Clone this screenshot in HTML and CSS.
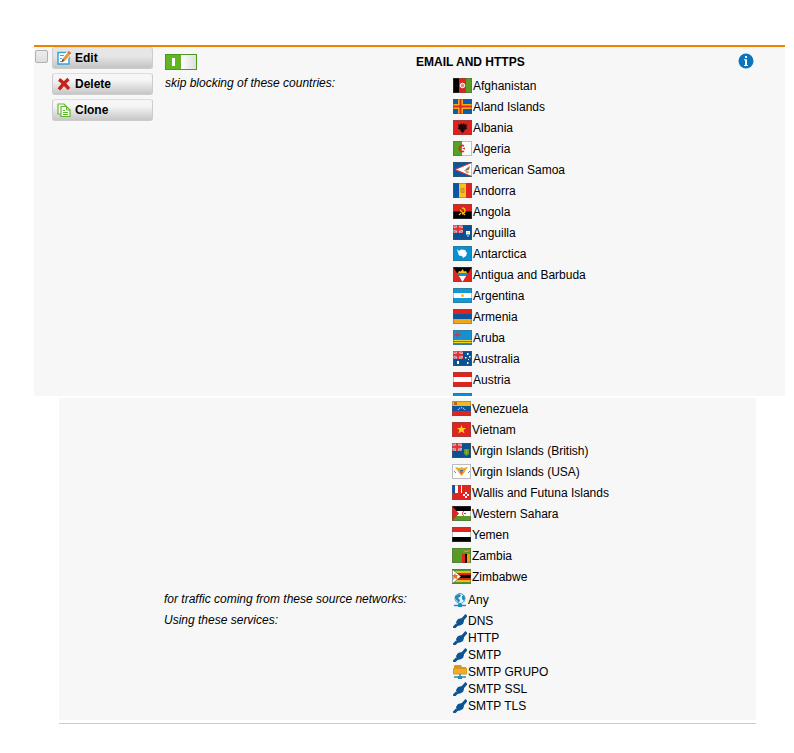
FILE: index.html
```html
<!DOCTYPE html>
<html lang="en">
<head>
    <meta charset="UTF-8">
    <title>Country Blocking</title>
    <link rel="stylesheet" href="styles.css">
</head>
<body>
    <svg class="defs" aria-hidden="true">
        <symbol id="union" viewBox="0 0 10 8">
            <path fill="#5a7db2" d="M0 0h10v8H0z"/>
            <path stroke="#f6d3d5" stroke-width="2" d="M0 0l10 8M10 0L0 8"/>
            <path stroke="#f6d3d5" stroke-width="3" d="M5 0v8M0 4h10"/>
            <path stroke="#e2343a" stroke-width="1" d="M0 0l10 8M10 0L0 8"/>
            <path stroke="#e2343a" stroke-width="2" d="M5 0v8M0 4h10"/>
        </symbol>
        <symbol id="service" viewBox="0 0 14 14">
            <path stroke="#0b5592" stroke-width="3" d="M.5 14L4 10.500M10 5l3.500-4"/>
            <path fill="#0b5592" d="M3 8l2-3 4-1 2-1v4l-1 3-3 1.500-3 .5z"/>
        </symbol>
    </svg>

    <div class="rule">
        <div class="actions">
            <input type="checkbox" class="select" aria-label="Select rule">
            <div class="buttons">
                <button type="button" class="active">
                    <svg width="14" height="14" viewBox="0 0 14 14"><path fill="#fff" stroke="#35a3dc" stroke-width="1.500" d="M1 1.500h11v11.500H1z"/><path stroke="#35a3dc" d="M3 4.500h6M3 7.500h4M3 10.500h3"/><path stroke="#fff" stroke-width="5" d="M6 10l6-8"/><path stroke="#e89a23" stroke-width="3" d="M7 8.500l5-6"/><path fill="#555" d="M4.500 11.500l1-4 2.500 2z"/><path stroke="#d9705a" stroke-width="3" d="M11.500 2.800l1.500-1.800"/></svg>Edit
                </button>
                <button type="button">
                    <svg width="14" height="14" viewBox="0 0 14 14"><path stroke="#c5221c" stroke-width="3.400" fill="none" d="M2 2.500c3 2 7 6 10 9.500M11.500 2C8 5 5 8 2 12.500"/></svg>Delete
                </button>
                <button type="button">
                    <svg width="14" height="14" viewBox="0 0 14 14"><path fill="#fff" stroke="#5fb92c" stroke-width="1.200" d="M1 1h6l2 2v8H1z"/><path fill="#fff" stroke="#5fb92c" stroke-width="1.200" d="M4 3.500h5.500L13 7v6.500H4z"/><path stroke="#5fb92c" fill="none" d="M9.500 4v3H13M6 7.500h2M6 9.500h5M6 11.500h5"/></svg>Clone
                </button>
            </div>
        </div>
        <div class="details">
            <div><input type="checkbox" class="switch" aria-label="Rule enabled" checked></div>
            <h1>EMAIL AND HTTPS</h1>
            <a href="#" class="info" aria-label="Information">
                <svg width="16" height="16" viewBox="0 0 16 16"><circle cx="8" cy="8" r="7.500" fill="#0a75bb"/><path fill="#fff" d="M7 3h2v2H7zM6 6.300h3v5.700h1v1H6v-1h1V7.300H6z"/></svg>
            </a>
            <p>skip blocking of these countries:</p>
            <ul class="countries">
                <li><svg class="flag" viewBox="0 0 19 15"><path d="M0 0h6v15H0z"/><path fill="#e0231c" d="M6 0h7v15H6z"/><path fill="#5b9c22" d="M13 0h6v15h-6z"/><circle cx="9.500" cy="7.500" r="2.300" fill="#e88" stroke="#fff"/></svg>Afghanistan</li>
                <li><svg class="flag" viewBox="0 0 19 15"><path fill="#0e5ca4" d="M0 0h19v15H0z"/><path stroke="#f3a81c" stroke-width="5" d="M7.500 0v15M0 7.500h19"/><path stroke="#dd2a22" stroke-width="2" d="M7.500 0v15M0 7.500h19"/></svg>Aland Islands</li>
                <li><svg class="flag" viewBox="0 0 19 15"><path fill="#e0201f" d="M0 0h19v15H0z"/><path fill="#1c0808" d="M5 4l2 1 1-2 1.500 1.500L11 3l1 2 2-1-.5 3 .5 2-2 .5-1 2-1.500 1.500L8 11.500l-1-2L5 9l.5-2z"/></svg>Albania</li>
                <li><svg class="flag" viewBox="0 0 19 15"><path fill="#fff" d="M0 0h19v15H0z"/><path fill="#58a024" d="M0 0h9v15H0z"/><path fill="none" stroke="#e2262a" stroke-width="1.500" d="M11 5a3 3 0 1 0 0 5"/><path fill="#e2262a" d="M9 7.500l3-1v2z"/></svg>Algeria</li>
                <li><svg class="flag" viewBox="0 0 19 15"><path fill="#0b569d" d="M0 0h19v15H0z"/><path fill="#fff" stroke="#e0302c" d="M20 0L2 7.500 20 15z"/><path fill="#a0703c" d="M17 4l-1 4-5 1 3-3zM12 9l5 1-3 1z"/></svg>American Samoa</li>
                <li><svg class="flag" viewBox="0 0 19 15"><path fill="#0b56a4" d="M0 0h6v15H0z"/><path fill="#f6c21b" d="M6 0h7v15H6z"/><path fill="#e0241f" d="M13 0h6v15h-6z"/><path fill="#e0a53a" stroke="#c98d35" d="M8 5.500h3v4H8z"/></svg>Andorra</li>
                <li><svg class="flag" viewBox="0 0 19 15"><path d="M0 0h19v15H0z"/><path fill="#e0231c" d="M0 0h19v7.500H0z"/><path fill="none" stroke="#f0b91c" stroke-width="1.300" d="M9 4c4 0 4 5 0 6M6 11l2-2M7 6l5 5"/></svg>Angola</li>
                <li><svg class="flag" viewBox="0 0 19 15"><path fill="#0c508f" d="M0 0h19v15H0z"/><use href="#union" width="10" height="8"/><path fill="#fff" d="M13 6h4v3l-2 3-2-3z"/><path fill="#49a5d5" d="M13 9h4l-2 3z"/><path fill="#f0c980" d="M14 7h2v1h-2z"/></svg>Anguilla</li>
                <li><svg class="flag" viewBox="0 0 19 15"><path fill="#0793d3" d="M0 0h19v15H0z"/><path fill="#fff" d="M4 3l2 2 2-1.500 4 .5 2 3-1 3-3 2-1-2-3-.5-1-3z"/></svg>Antarctica</li>
                <li><svg class="flag" viewBox="0 0 19 15"><path fill="#e0241f" d="M0 0h19v15H0z"/><path d="M0 0h19l-4 6H4z"/><path fill="#f8c51a" d="M5 6l1-2 2 .5L9.500 2 11 4.500l2-.5 1 2z"/><path fill="#1d8bd0" d="M4 6h11l-2 3.500H6z"/><path fill="#fff" d="M6 9h7l-3.500 6z"/></svg>Antigua and Barbuda</li>
                <li><svg class="flag" viewBox="0 0 19 15"><path fill="#1497d5" d="M0 0h19v15H0z"/><path fill="#fff" d="M0 5h19v5H0z"/><circle cx="9.500" cy="7.500" r="1.500" fill="#f3bb2c"/></svg>Argentina</li>
                <li><svg class="flag" viewBox="0 0 19 15"><path fill="#e0231c" d="M0 0h19v5H0z"/><path fill="#0e55a0" d="M0 5h19v5H0z"/><path fill="#efa81c" d="M0 10h19v5H0z"/></svg>Armenia</li>
                <li><svg class="flag" viewBox="0 0 19 15"><path fill="#1690d2" d="M0 0h19v15H0z"/><path stroke="#f0d62c" d="M0 10.500h19M0 12.500h19"/><path stroke="#e0302c" stroke-width="1.500" d="M4.500 2v6M1.500 5h6"/></svg>Aruba</li>
                <li><svg class="flag" viewBox="0 0 19 15"><path fill="#0c508f" d="M0 0h19v15H0z"/><use href="#union" width="10" height="8"/><path fill="#fff" d="M4 10h2v3H4zM14 2h1.500v2H14zM12 6h1.500v1.500H12zM16 5h1.500v1.500H16zM14 11h1.500v2H14zM15 8h1v1h-1z"/></svg>Australia</li>
                <li><svg class="flag" viewBox="0 0 19 15"><path fill="#e0231c" d="M0 0h19v15H0z"/><path fill="#fff" d="M0 5h19v5H0z"/></svg>Austria</li>
                <li class="cut"><svg class="flag" viewBox="0 0 19 15"><path fill="#0793d3" d="M0 0h19v15H0z"/></svg></li>
            </ul>
        </div>
    </div>

    <div class="more">
        <ul class="countries">
            <li><svg class="flag" viewBox="0 0 19 15"><path fill="#f3b81f" d="M0 0h19v5H0z"/><path fill="#0e55a0" d="M0 5h19v5H0z"/><path fill="#e0241f" d="M0 10h19v5H0z"/><path fill="#b76522" d="M2 1h3v3H2z"/><path fill="none" stroke="#fff" stroke-dasharray="1 1" d="M6 9c1-3 6-3 7 0"/></svg>Venezuela</li>
            <li><svg class="flag" viewBox="0 0 19 15"><path fill="#e0241f" d="M0 0h19v15H0z"/><path fill="#fbd31e" d="M9.500 3l1 3h3.500l-2.500 2 1 3.500-3-2-3 2 1-3.500L5 6h3.500z"/></svg>Vietnam</li>
            <li><svg class="flag" viewBox="0 0 19 15"><path fill="#0c508f" d="M0 0h19v15H0z"/><use href="#union" width="10" height="8"/><path fill="#5f9d2b" d="M12 6h5v5l-2.500 2L12 11z"/><path fill="#9fae3a" d="M14 7h1v4h-1z"/></svg>Virgin Islands (British)</li>
            <li><svg class="flag" viewBox="0 0 19 15"><path fill="#fff" d="M0 0h19v15H0z"/><path fill="#e5ab32" d="M3 3l5 1 1.500-1L11 4l5-1-4 6-2.500 3L7 9z"/><path fill="#386ca8" d="M8 6h3v1.500H8z"/><path fill="#d94a3f" d="M8 8h3l-1.500 2z"/><path stroke="#5584b5" d="M2 7l2 2M16 9l2-2"/></svg>Virgin Islands (USA)</li>
            <li><svg class="flag" viewBox="0 0 19 15"><path fill="#e0241f" d="M0 0h19v15H0z"/><path fill="#fff" d="M0 0h10v8H0z"/><path fill="#0e55a0" d="M0 0h3v8H0z"/><path fill="#e0241f" d="M6 0h3v8H6z"/><path fill="#fff" d="M13 7h2v2h-2zM13 11h2v2h-2zM11 9h2v2h-2zM15 9h2v2h-2z"/></svg>Wallis and Futuna Islands</li>
            <li><svg class="flag" viewBox="0 0 19 15"><path fill="#fff" d="M0 0h19v15H0z"/><path d="M0 0h19v5H0z"/><path fill="#559c28" d="M0 10h19v5H0z"/><path fill="#e0241f" d="M0 0l7 7.500L0 15z"/><path fill="none" stroke="#e0241f" d="M12 5.500c-2 0-2 4 0 4"/><path fill="#e0241f" d="M12 7h2v1h-2z"/></svg>Western Sahara</li>
            <li><svg class="flag" viewBox="0 0 19 15"><path fill="#e0241f" d="M0 0h19v5H0z"/><path fill="#fff" d="M0 5h19v5H0z"/><path d="M0 10h19v5H0z"/></svg>Yemen</li>
            <li><svg class="flag" viewBox="0 0 19 15"><path fill="#559c24" d="M0 0h19v15H0z"/><path fill="#e0241f" d="M10 6h3v9h-3z"/><path d="M13 6h2v9h-2z"/><path fill="#f19a1e" d="M15 6h3v9h-3zM11 2l3 1 4-1-2 2h-3z"/></svg>Zambia</li>
            <li><svg class="flag" viewBox="0 0 19 15"><path fill="#559c24" d="M0 0h19v15H0z"/><path fill="#f3b81f" d="M0 2h19v11H0z"/><path fill="#e0241f" d="M0 4h19v7H0z"/><path d="M6 6h13v3H6z"/><path fill="#fff" stroke="#222" stroke-width=".5" d="M0 0l9 7.500L0 15z"/><path fill="#e2762a" d="M3 4l1 2h2L5 8l1 3-3-2-2 2 .5-3L0 6h2z"/></svg>Zimbabwe</li>
        </ul>
        <p class="source">for traffic coming from these source networks:</p>
        <ul class="networks">
            <li><svg width="14" height="14" viewBox="0 0 14 14"><circle cx="7" cy="5.500" r="5" fill="#e9f6fc" stroke="#38a7d7"/><path fill="#2589bd" d="M2 3l4-2 2 1-1 2-2 1 2 2-1 3-2-2-2-3zM9 3l2-1 1 3-1 3-2-2z"/><path stroke="#238bbd" stroke-width="1.500" d="M7 10v2M1 12.500h12"/><path fill="#238bbd" d="M5 11h4v3H5z"/></svg>Any</li>
        </ul>
        <p>Using these services:</p>
        <ul class="services">
            <li><svg width="14" height="14"><use href="#service"/></svg>DNS</li>
            <li><svg width="14" height="14"><use href="#service"/></svg>HTTP</li>
            <li><svg width="14" height="14"><use href="#service"/></svg>SMTP</li>
            <li><svg width="14" height="14" viewBox="0 0 14 14"><path fill="#d7981b" d="M2 0h6l1 2h4v3H1V1z"/><path fill="#f1ad28" stroke="#d7981b" d="M.5 3.500h13v5.500H.5z"/><path stroke="#238bbd" stroke-width="1.500" d="M7 9v2M1 12h12"/><path fill="#238bbd" d="M5 11h4v3H5z"/></svg>SMTP GRUPO</li>
            <li><svg width="14" height="14"><use href="#service"/></svg>SMTP SSL</li>
            <li><svg width="14" height="14"><use href="#service"/></svg>SMTP TLS</li>
        </ul>
    </div>
</body>
</html>
```

FILE: styles.css
```css
* {
    box-sizing: border-box;
}
body {
    margin: 0;
    padding: 45px 9px 28px 34px;
    background-color: #fff;
    font-family: "Liberation Sans", Arial, sans-serif;
    font-size: 12px;
    color: #000;
}
h1, p, ul {
    margin: 0;
    padding: 0;
}
ul {
    list-style: none;
}
.defs {
    position: absolute;
    width: 0;
    height: 0;
}

.rule {
    display: flex;
    gap: 12px;
    background-color: #f7f7f7;
    border-top: 2px solid #f08200;
}
.actions {
    display: flex;
    align-items: flex-start;
    gap: 4px;
    padding-left: 1px;
}
.select {
    appearance: none;
    width: 13px;
    height: 13px;
    margin: 3px 0 0;
    border: 1px solid #b0b0b0;
    border-radius: 2px;
    background: linear-gradient(#eee, #ddd);
}
.buttons {
    display: flex;
    flex-direction: column;
    gap: 4px;
    width: 101px;
}
button {
    display: flex;
    align-items: center;
    gap: 4px;
    height: 22px;
    padding: 0 4px;
    border: 1px solid #ccc;
    border-top-color: #ddd;
    border-radius: 3px;
    background: linear-gradient(#f6f6f6 30%, #c6c6c6);
    font-family: inherit;
    font-size: 12px;
    font-weight: bold;
    color: #000;
    cursor: pointer;
}
button.active {
    background: linear-gradient(#e6e6e6 40%, #c4c4c4);
}

.details {
    flex: 1;
    display: grid;
    grid-template-columns: 251px 1fr 47px;
    grid-template-rows: 22px auto;
    padding-top: 4px;
}
.details h1 {
    font-size: 12px;
    line-height: 22px;
}
.details .countries {
    grid-column: 2 / 4;
    margin: 2px 0 0 37px;
}
.switch {
    appearance: none;
    display: block;
    width: 32px;
    height: 16px;
    margin: 3px 0 0;
    border: 1px solid #4c9a1c;
    background:
        linear-gradient(#fff, #fff) 6px 3px / 3px 8px no-repeat,
        linear-gradient(90deg, #fff, #ddd) right / 15px 14px no-repeat,
        #62b424;
}
.info {
    padding-top: 2px;
}
.info svg {
    display: block;
}
p {
    font-style: italic;
    line-height: 17px;
}
.details p {
    padding-top: 2px;
}
li {
    display: flex;
    align-items: center;
}
.countries li {
    height: 21px;
    gap: 1px;
}
.countries .cut {
    height: 6px;
    padding-top: 3px;
    align-items: flex-start;
    overflow: hidden;
}
.flag {
    flex: none;
    width: 19px;
    height: 15px;
    outline: 1px solid rgba(90, 90, 90, 0.4);
    outline-offset: -1px;
}

.more {
    display: grid;
    grid-template-columns: 288px 1fr;
    margin: 2px 29px 0 25px;
    padding: 0 0 6px 105px;
    background-color: #f7f7f7;
    position: relative;
}
.more::after {
    content: "";
    position: absolute;
    left: 0;
    right: 0;
    bottom: -4px;
    border-bottom: 1px solid #ccc;
}
.more .countries {
    grid-column: 2;
}
.more .source {
    line-height: 25px;
}
.networks li, .services li {
    gap: 1px;
    padding-left: 1px;
}
.networks li {
    height: 25px;
}
.services li {
    height: 17px;
}
```
